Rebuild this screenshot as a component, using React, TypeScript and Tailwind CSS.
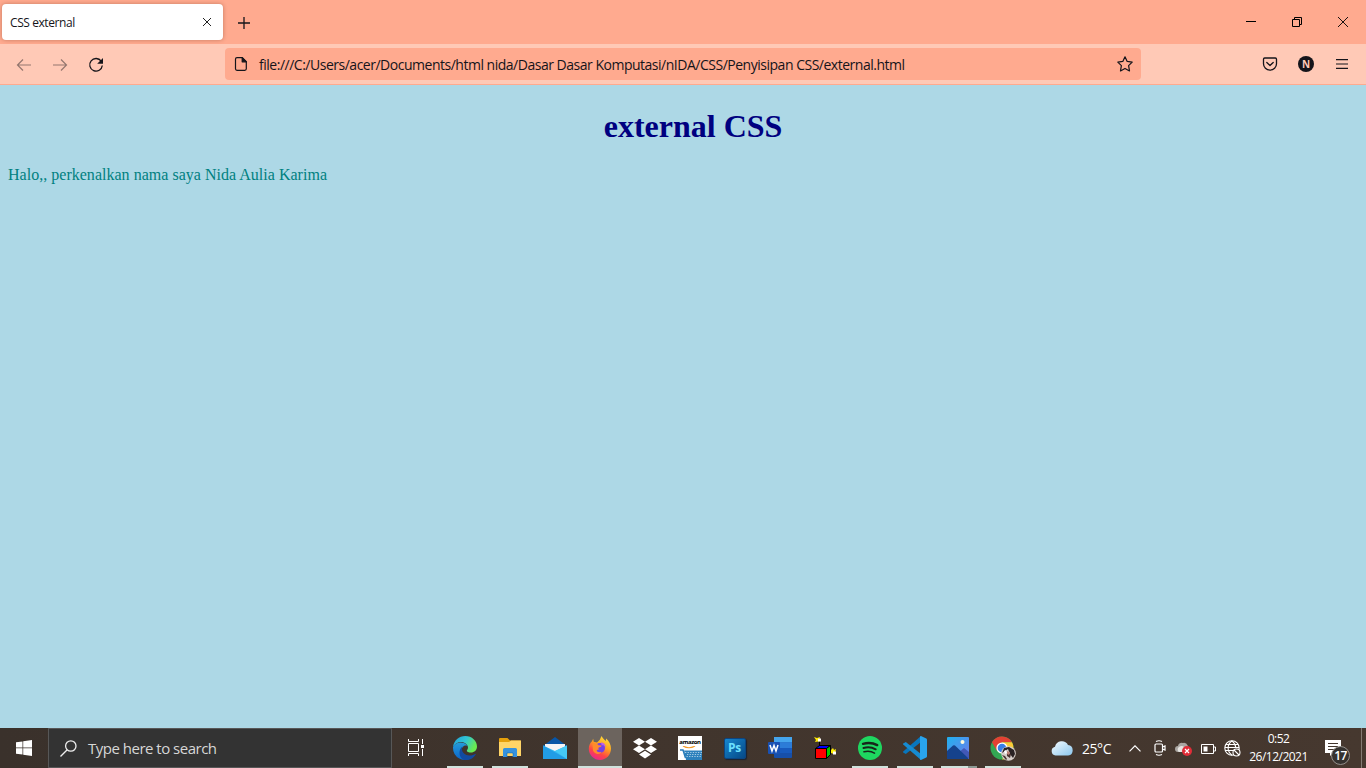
import React from 'react';

const BrowserTabs = () => (
  <div className="flex h-11 shrink-0 items-center bg-[#ffaa8f]">
    <div className="ml-[2px] flex h-9 w-[221px] items-center justify-between rounded-[4px] bg-white pl-2 pr-[11px] shadow-[0_0_4px_rgba(90,30,10,0.35)]">
      <span className="whitespace-nowrap pt-[2px] text-[12px] leading-4 tracking-[-0.42px] text-[#15141a]">CSS external</span>
      <svg className="h-[10px] w-[10px]" viewBox="0 0 10 10" fill="none" stroke="#222" strokeWidth="1"><path d="M1 1l8 8M9 1L1 9" /></svg>
    </div>
    <svg className="ml-[15px] mt-px h-3 w-3" viewBox="0 0 12 12" stroke="#15141a" strokeWidth="1.3"><path d="M0 6h12M6 0v12" /></svg>
    <div className="ml-auto flex items-center">
      <div className="flex w-[46px] justify-center"><svg className="mb-px h-[11px] w-[10px]" viewBox="0 0 10 11" stroke="#000"><path d="M0 5.5h10" /></svg></div>
      <div className="flex w-[46px] justify-center"><svg className="h-[10px] w-[10px]" viewBox="0 0 10 10" fill="none" stroke="#000"><path d="M.5 2.5h7v7h-7zM2.5 2.5v-2h7v7h-2" /></svg></div>
      <div className="flex w-[46px] justify-center"><svg className="h-[10px] w-[10px]" viewBox="0 0 10 10" stroke="#000" strokeWidth=".9"><path d="M0 0l10 10M10 0L0 10" /></svg></div>
    </div>
  </div>
);

const Toolbar = () => (
  <div className="flex h-[41px] shrink-0 items-center border-b border-[#ffaa8f] bg-[#ffc9b6] text-[#15141a]">
    <svg className="ml-4 mt-px h-4 w-4 opacity-45" viewBox="0 0 16 16" fill="none" stroke="currentColor" strokeWidth="1.2"><path d="M15 8H1.5M7 2.5L1.5 8 7 13.5" /></svg>
    <svg className="ml-5 mt-px h-4 w-4 opacity-45" viewBox="0 0 16 16" fill="none" stroke="currentColor" strokeWidth="1.2"><path d="M1 8h13.500M9 2.500L14.500 8 9 13.500" /></svg>
    <svg className="ml-5 mt-[2px] h-4 w-4" viewBox="0 0 16 16" fill="none" stroke="currentColor" strokeWidth="1.3"><path d="M13.200 4.200A6.300 6.300 0 1 0 14.300 8.500" /><path d="M15 1v5.800H9.200z" fill="currentColor" stroke="none" /></svg>
    <div className="ml-[121px] flex h-8 w-[916px] items-center rounded-[4px] bg-[#ffaa8f] pl-2 pr-2">
      <svg className="h-4 w-4" viewBox="0 0 16 16" fill="none" stroke="currentColor" strokeWidth="1.2" strokeLinejoin="round"><path d="M4 1.700h5.300L13.300 5.700v7.100a1.500 1.500 0 0 1-1.500 1.500H4a1.500 1.500 0 0 1-1.500-1.500V3.200A1.500 1.500 0 0 1 4 1.700z" /><path d="M9.200 1.700v4.100h4.100z" fill="currentColor" /></svg>
      <span className="ml-[10px] whitespace-nowrap pt-[2px] text-[14px] leading-5 tracking-[-0.487px]">file:///C:/Users/acer/Documents/html nida/Dasar Dasar Komputasi/nIDA/CSS/Penyisipan CSS/external.html</span>
      <svg className="ml-auto h-4 w-4" viewBox="0 0 16 16" fill="none" stroke="currentColor" strokeWidth="1.2" strokeLinejoin="round"><path d="M8 .8l2.200 4.600 5 .7-3.600 3.500.9 5.300L8 12.400l-4.500 2.500.9-5.300L.8 6.100l5-.7z" /></svg>
    </div>
    <svg className="ml-[121px] h-4 w-4" viewBox="0 0 16 16" fill="none" stroke="currentColor" strokeWidth="1.300" strokeLinecap="round" strokeLinejoin="round"><path d="M2.700 2h10.600a1.200 1.200 0 0 1 1.200 1.200V7.700a6.500 6.500 0 0 1-13 0V3.200A1.200 1.200 0 0 1 2.700 2z" /><path d="M4.800 6.500L8 9.500l3.200-3" /></svg>
    <div className="ml-5 flex h-4 w-4 items-center justify-center rounded-full bg-[#15141a] text-[10px] font-bold leading-none text-[#ffc9b6]">N</div>
    <svg className="mb-px ml-[22px] h-[10px] w-3" viewBox="0 0 12 10" stroke="currentColor" strokeWidth="1.200"><path d="M0 .7h12M0 5h12M0 9.300h12" /></svg>
  </div>
);

const Edge = () => (
  <svg className="h-6 w-6" viewBox="0 0 24 24">
    <defs>
      <linearGradient id="eg" x1="0" y1="0" x2="1" y2=".4"><stop offset="0" stopColor="#219dd8" /><stop offset=".55" stopColor="#31c5d4" /><stop offset="1" stopColor="#69eb50" /></linearGradient>
      <linearGradient id="eb" x1="0" y1="0" x2="0" y2="1"><stop offset="0" stopColor="#249cd9" /><stop offset="1" stopColor="#0b65ca" /></linearGradient>
    </defs>
    <path d="M0 11C1 4.300 6 0 12.200 0 19 0 24 5 24 10.500c0 3.700-2.700 6-6 6-2.300 0-4.200-.8-4.200-1.800 0-.8 1.200-1.100 1.200-3.200C15 8.500 11.800 6 8 6 4.500 6 1.500 8 0 11z" fill="url(#eg)" />
    <path d="M0 11c1.500-3 4.300-4.600 7.500-4.600 3.700 0 6 1.600 7 3.400-3-1.200-6 1-6 4.700 0 5 5.500 9.500 10 7.500A12 12 0 0 1 0 12z" fill="url(#eb)" />
    <path d="M9.500 10.500c-2 4.600 1.500 9 7 9 2.500 0 4.500-.7 5.700-1.500.5-.3.800.1.500.5C20 23 15.500 24.500 11.500 24 6 22.500 4.600 14 9.500 10.500z" fill="#124aa0" />
  </svg>
);

const Explorer = () => (
  <svg className="h-5 w-[22px]" viewBox="0 0 22 20">
    <path d="M0 1.300Q0 0 1 0h7.500L11 2.500H21q1 0 1 1V7H0z" fill="#e5a00b" />
    <path d="M0 4h10l2-1.500h10V18H0z" fill="#ffd567" />
    <path d="M4 19v-7.500Q4 10 5.500 10h11q1.500 0 1.500 1.500V19h-4v-4H8v4z" fill="#3592dd" />
    <path d="M8 19v-4h6v4" fill="none" stroke="#1979c3" />
    <path d="M8.500 15.500h5V18h-5z" fill="#ffd567" />
  </svg>
);

const Mail = () => (
  <svg className="h-[22px] w-6" viewBox="0 0 24 22">
    <path d="M0 9L12 0l12 9v5H0z" fill="#0756a8" /><path d="M2 7h20v9H2z" fill="#f4f4f6" />
    <path d="M0 8.500L12 14l12-5.500V22H0z" fill="#35b9f1" /><path d="M0 8.500V22h24z" fill="#219ce5" /><path d="M12 14l12-5.500V22z" fill="#45c9f5" />
  </svg>
);

const Firefox = () => (
  <svg className="h-6 w-6" viewBox="0 0 24 24">
    <defs><linearGradient id="ff" x1=".8" y1="0" x2=".3" y2="1"><stop offset="0" stopColor="#ffe43f" /><stop offset=".4" stopColor="#ffa51f" /><stop offset=".72" stopColor="#ff4545" /><stop offset="1" stopColor="#e72691" /></linearGradient></defs>
    <path d="M5.200 2.800l.5 3 3.300.7 2.800-2.800L13.500 0c1 2 2.300 3.200 4.300 5l.3-2.500C21 5 23 8.700 23 12.500 23 19 18 24 12 24S.8 19 .8 13c0-3.800 1.300-6 3-7.500z" fill="url(#ff)" />
    <circle cx="12" cy="12" r="5" fill="#7542e5" /><path d="M13 6.500c3 0 4.700 2.200 4.700 5-1-2-2.500-2.500-4-2.300z" fill="#bd60e9" />
    <path d="M4.500 8.200c2.200-1.500 5-.7 6 1l3 .2c.2 1.500-2 1.500-2.800 2.200-.6.500.1 1.800 0 2.200-1.500-.3-2.500.3-1.700 1.500 1.200 1.500 3 1 4.500.5-2 3.700-7 2.200-8.500-1.300z" fill="#ff8b2c" />
  </svg>
);

const Dropbox = () => (
  <svg className="h-[21px] w-6" viewBox="0 0 24 21" fill="#fff"><path d="M6 0l6 3.700-6 3.800-6-3.800zM18 0l6 3.700-6 3.800-6-3.800zM6 7.500l6 3.700L6 15l-6-3.800zM18 7.500l6 3.700-6 3.800-6-3.800zM12 12.700l6 3.800-6 3.900-6-3.900z" /></svg>
);

const Amazon = () => (
  <div className="flex h-6 w-6 flex-col items-center overflow-hidden bg-white">
    <span className="mt-[3px] text-[6px] font-bold leading-[7px] tracking-[-0.4px] text-black">amazon</span>
    <svg className="h-[14px] w-6 shrink-0" viewBox="0 0 24 14">
      <path d="M5 0q6 3.500 12 0" stroke="#f49a27" strokeWidth="1.200" fill="none" />
      <path d="M2 4h3l2.500 8" stroke="#267ab8" strokeWidth="1.500" fill="none" /><path d="M6 4.500h18V14H8z" fill="#2c80bc" />
      <path d="M7 6.500h17M9 8.500h15M8.500 10.500H24" stroke="#b4d5e9" strokeWidth=".9" strokeDasharray="1.300 1.300" />
    </svg>
  </div>
);

const Photoshop = () => (
  <div className="mr-px flex h-[21px] w-[22px] items-center justify-center rounded-[2px] border border-[#0b4684] bg-linear-to-br from-[#1787d0] to-[#064986] shadow-[1px_1px_1px_#182434]">
    <span className="text-[12px] font-bold leading-none tracking-[-0.3px] text-[#6ce1ff]">Ps</span>
  </div>
);

const Word = () => (
  <svg className="h-[22px] w-6" viewBox="0 0 24 22">
    <rect x="6" y="0" width="18" height="21" rx="1" fill="#174fa9" /><path d="M6 0h18v5.500H6z" fill="#45a5ed" /><path d="M6 5.500h18V11H6z" fill="#2c7cd8" /><path d="M6 11h18v5H6z" fill="#185abd" />
    <rect y="5" width="12" height="12" rx="1" fill="#1951b4" /><path d="M2 8l2 6 2-5.500L8 14l2-6" fill="none" stroke="#fff" strokeWidth="1.500" />
  </svg>
);

const Cube = () => (
  <svg className="h-[23px] w-6" viewBox="0 0 24 23" stroke="#000">
    <path d="M2.500 11.500h11v10h-11z" fill="#f00" /><path d="M2.500 11.500l4-3h11l-4 3z" fill="#00f" /><path d="M13.500 11.500l4-3v9l-4 4z" fill="#0c0" />
    <path d="M6.500 9V3.500" fill="none" />
    <g stroke="none"><path d="M1 0l3 1L7 0l-.5 2L8 4l-3 .5L2 5l1-2z" fill="#ffed00" /><path d="M5 1.500h3v3H5z" fill="#fff" /><path d="M18 13l2-2 1 2 2-1-.5 3-1.500 2-3-1z" fill="#ffed00" /><path d="M20 14.500h3v3h-3z" fill="#fff" /></g>
  </svg>
);

const Spotify = () => (
  <svg className="h-6 w-6" viewBox="0 0 24 24" fill="none" strokeLinecap="round" stroke="#17251b"><circle cx="12" cy="12" r="12" fill="#1ed760" stroke="none" /><path d="M5 7.800c4.700-1.300 10-1 14.200 1.300" strokeWidth="2.400" /><path d="M5.500 12c4-1.200 8.500-.8 12.200 1.300" strokeWidth="2" /><path d="M6 15.800c3.500-.9 7.500-.5 10.500 1.300" strokeWidth="1.600" /></svg>
);

const VSCode = () => (
  <svg className="mr-px h-6 w-6" viewBox="0 0 24 24"><path d="M18 0v6L2.800 18 .2 16.500q-.4-.5 0-1z" fill="#0876bd" /><path d="M18 24v-6L2.800 6 .2 7.500q-.4.500 0 1z" fill="#168bd1" /><path d="M18 0l5.300 2.500q.7.400.7 1.200v16.600q0 .8-.7 1.200L18 24q-1 0-1-1V1q0-1 1-1z" fill="#29a4ed" /></svg>
);

const Photos = () => (
  <svg className="mr-[2px] h-[22px] w-[22px]" viewBox="0 0 22 22"><defs><linearGradient id="ph" x1="0" y1="0" x2="1" y2="1"><stop stopColor="#20b1ef" /><stop offset="1" stopColor="#7478e8" /></linearGradient></defs><rect width="22" height="22" rx="1" fill="url(#ph)" /><path d="M11 16l6-5 5 4v7H8z" fill="#4258b7" /><path d="M0 14l6-5.500q1-.7 2 0L21 21v1H0z" fill="#15428c" /><circle cx="15.500" cy="5" r="2" fill="#fffadd" /></svg>
);

const Chrome = () => (
  <svg className="h-[25px] w-[26px]" viewBox="0 0 26 25">
    <circle cx="12" cy="12" r="11.500" fill="#33a653" /><path d="M2 6.200A11.500 11.500 0 0 1 22 6.300H12L7 15z" fill="#e34133" /><path d="M12 6.300h10a11.500 11.500 0 0 1-10 17.200l5-8.500z" fill="#fcca35" />
    <circle cx="12" cy="12" r="5.600" fill="#fff" /><circle cx="12" cy="12" r="4.300" fill="#397ee5" />
    <circle cx="18.500" cy="17.500" r="7.300" fill="#d5cdc8" /><path d="M12 17l2-5 5-1 5 3 1 4-2 4-3-4-2-5-3 2z" fill="#292223" /><path d="M12 19l3 1 2 3-1 1zM17 17l4 1-1 4-3-2z" fill="#49332f" /><path d="M14 15l2-1 1 3-2 1z" fill="#fff" /><path d="M17 15l3 1-1 3-2-1z" fill="#bc8075" />
  </svg>
);

const apps = [
  { Icon: Edge, open: true }, { Icon: Explorer, open: true }, { Icon: Mail }, { Icon: Firefox, active: true },
  { Icon: Dropbox }, { Icon: Amazon }, { Icon: Photoshop }, { Icon: Word }, { Icon: Cube },
  { Icon: Spotify, open: true }, { Icon: VSCode, open: true }, { Icon: Photos, open: true, tight: true, stacked: true }, { Icon: Chrome, open: true, tight: true },
];

const SystemTray = () => (
  <div className="ml-auto flex h-full shrink-0 items-center text-white">
    <svg className="h-4 w-[22px]" viewBox="0 0 22 16"><defs><linearGradient id="cl" x1="0" y1="0" x2="1" y2="1"><stop stopColor="#f5fbff" /><stop offset="1" stopColor="#8bc7ee" /></linearGradient></defs><path d="M4.500 15.500A4.500 4.500 0 0 1 4 6.700 7 7 0 0 1 17 5a5.300 5.300 0 0 1 .2 10.500z" fill="url(#cl)" /></svg>
    <span className="ml-[9px] w-[30px] whitespace-nowrap pt-px text-[14px] tracking-[-0.45px]">25°C</span>
    <svg className="ml-[17px] h-[7px] w-3" viewBox="0 0 12 7" fill="none" stroke="currentColor" strokeWidth="1.200"><path d="M.5 6.300L6 .8l5.500 5.500" /></svg>
    <svg className="ml-[13px] h-4 w-3" viewBox="0 0 12 16" fill="none" stroke="currentColor" strokeWidth="1.200"><rect x="1" y="4" width="7.500" height="8" rx="1" /><path d="M8.500 7l2.500-1v4L8.500 9M2 1.500q3-1.500 6 0M2 14.500q3 1.500 6 0" /></svg>
    <svg className="ml-[9px] h-4 w-[17px]" viewBox="0 0 17 16"><path d="M3 12a3 3 0 0 1 0-6 3.500 3.500 0 0 1 5-3q3-1 5 3v6z" fill="#aaa6a2" /><path d="M4 12a3 3 0 0 1 0-5q3-2 5 0l2 5z" fill="#e6e4e2" /><circle cx="12" cy="11" r="5" fill="#e12d38" /><path d="M10 9l4 4m0-4l-4 4" stroke="#fff" strokeWidth="1.200" /></svg>
    <svg className="ml-[9px] mt-px h-[10px] w-[15px]" viewBox="0 0 15 10"><path d="M.5.5h12v9H.5zM13 3h1.500v4H13" fill="none" stroke="currentColor" /><path d="M2.500 2.500h4v5h-4z" fill="currentColor" /></svg>
    <svg className="ml-2 h-[17px] w-[17px]" viewBox="0 0 17 17" fill="none" stroke="currentColor" strokeWidth="1.100"><circle cx="8" cy="8" r="7.200" /><path d="M8 .8C2.800 4.800 2.800 11.200 8 15.200M8 .8c3 2.500 3.600 4.500 3.700 6.500M2 4.500h12M1 10.500h8M1 7.500h14" /><circle cx="12.500" cy="12.500" r="3.500" fill="#44372f" /><path d="M10 10l5 5" /></svg>
    <div className="ml-[7px] flex h-full w-[61px] flex-col items-center pt-[2px] text-[12px] leading-[18px]"><span className="tracking-[-0.55px]">0:52</span><span className="whitespace-nowrap tracking-[-0.52px]">26/12/2021</span></div>
    <div className="relative ml-[16px] mt-2 h-6 w-[25px]">
      <svg className="h-4 w-4" viewBox="0 0 16 16"><path d="M0 0h16v13H8l-3 3v-3H0z" fill="#fff" /><path d="M3 3.500h10M3 6.500h10M3 9.500h7" stroke="#44372f" /></svg>
      <div className="absolute left-[6px] top-[6px] flex h-[19px] w-[19px] items-center justify-center rounded-full border border-[#94908c] bg-[#35322f] text-[12px] font-semibold leading-none tracking-[-0.7px]">17</div>
    </div>
    <div className="ml-[11px] mr-1 h-10 w-px bg-[#847b74]" />
  </div>
);

const Taskbar = () => (
  <div className="flex h-10 shrink-0 items-center bg-linear-to-r from-[#3a312b] via-[#41352d] to-[#46382f]">
    <div className="flex w-12 justify-center"><svg className="h-4 w-4" viewBox="0 0 16 16" fill="#fff"><path d="M0 2.300L6.500 1.400v6.200H0zM7.200 1.300L16 0v7.600H7.200zM0 8.300h6.500v6.300L0 13.700zM7.200 8.300H16V16l-8.800-1.300z" /></svg></div>
    <div className="flex h-full w-[344px] items-center border border-[#575757] bg-[#333] pl-[11px]">
      <svg className="h-[17px] w-[17px]" viewBox="0 0 17 17" fill="none" stroke="#eee" strokeWidth="1.300"><circle cx="10.800" cy="6" r="5.200" /><path d="M7.200 9.700L.5 16.500" /></svg>
      <span className="ml-[11px] whitespace-nowrap text-[15px] tracking-[-0.5px] text-[#d7d7d7]">Type here to search</span>
    </div>
    <div className="flex w-[51px] pl-4"><svg className="mb-px h-[17px] w-[17px]" viewBox="0 0 17 17" fill="none" stroke="#fff" strokeWidth="1"><path d="M.5 0v2.500h10V0M.5 17v-2.500h10V17M.5 4.500h10v8H.5zM14.500 0v5M14.500 10v7" /><path d="M13 6h3v3h-3z" fill="#fff" stroke="none" /></svg></div>
    <div className="flex h-full">
      {apps.map(({ Icon, open, active, tight, stacked }, i) => (
        <div key={i} className={`flex h-full w-11 flex-col items-center ${i > 0 && !tight ? 'ml-px' : ''} ${active ? 'bg-[#6c645e]' : ''}`}>
          <div className="flex h-[38px] items-center pt-[2px]"><Icon /></div>
          <div className={`flex h-[2px] justify-end ${active ? 'w-11' : 'w-9'} ${open || active ? 'bg-[#cfe2dc]' : ''}`}>{stacked && <span className="h-[2px] w-[9px] bg-[#8b9993]" />}</div>
        </div>
      ))}
    </div>
    <SystemTray />
  </div>
);

export default function App() {
  return (
    <div className="flex h-screen w-full flex-col overflow-hidden bg-[#add8e6] font-['Open_Sans','Noto_Sans',sans-serif]">
      <BrowserTabs />
      <Toolbar />
      <main className="flex-1 px-2 pt-[23px] font-['Liberation_Serif',serif]">
        <h1 className="pl-5 text-center text-[32px] font-bold leading-9 text-[#000080]">external CSS</h1>
        <p className="mt-[22px] text-[16px] leading-[18px] tracking-[0.02px] text-[#008080]">Halo,, perkenalkan nama saya Nida Aulia Karima</p>
      </main>
      <Taskbar />
    </div>
  );
}
